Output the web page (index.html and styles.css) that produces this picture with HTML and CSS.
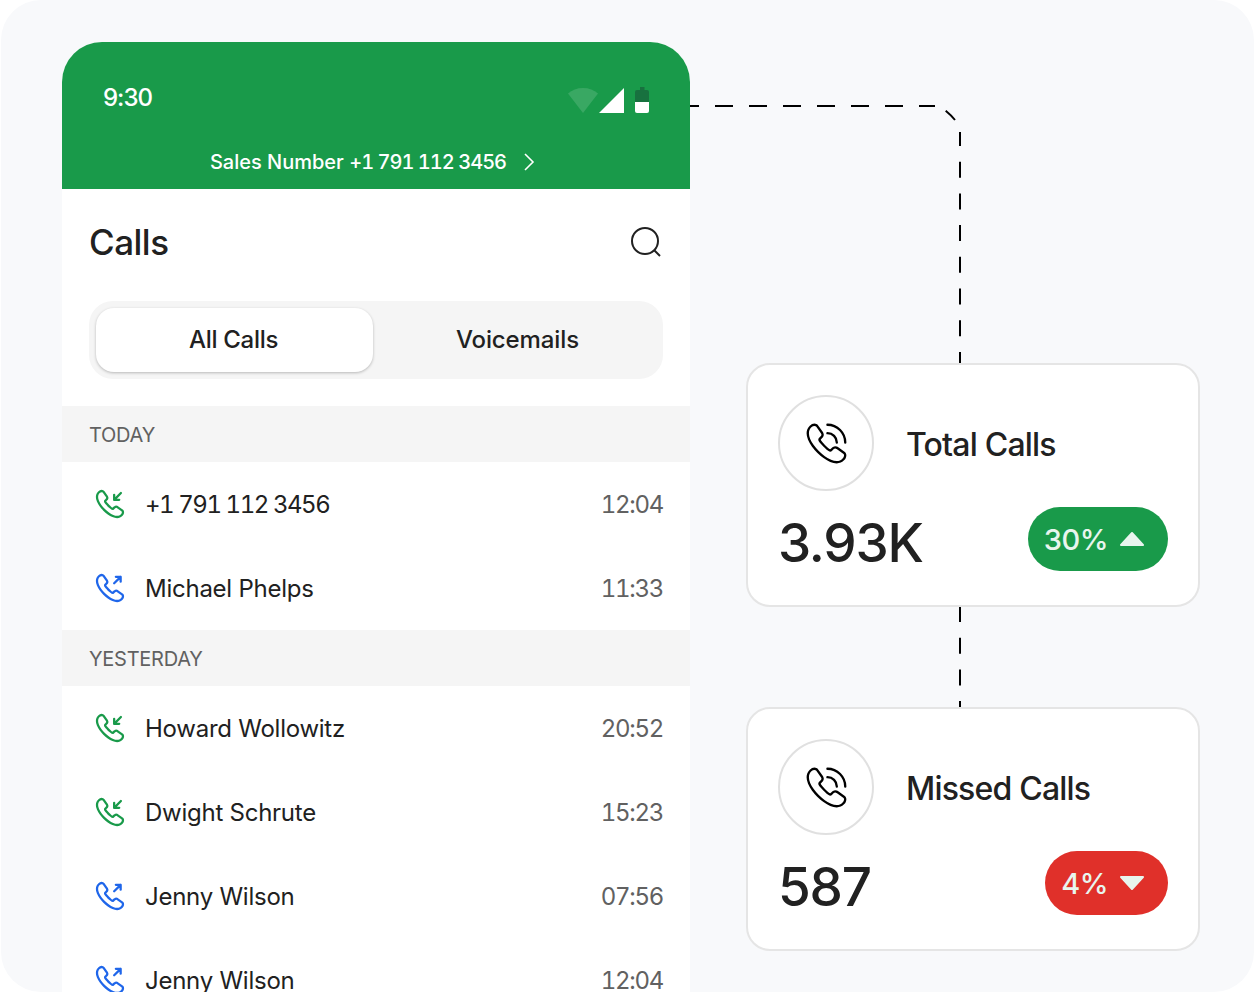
FILE: index.html
```html
<!DOCTYPE html>
<html lang="en">
<head>
<meta charset="utf-8">
<title>Calls</title>
<link rel="stylesheet" href="styles.css">
</head>
<body>
<svg width="0" height="0" class="defs">
  <defs>
    <path id="handset" d="M21.97 18.33c0 .36-.08.73-.25 1.09-.17.36-.39.7-.68 1.02-.49.54-1.03.93-1.64 1.18-.6.25-1.25.38-1.95.38-1.02 0-2.11-.24-3.26-.73s-2.3-1.15-3.44-1.98a28.75 28.75 0 0 1-3.28-2.8 28.414 28.414 0 0 1-2.79-3.27c-.82-1.14-1.48-2.28-1.96-3.41C2.24 8.67 2 7.58 2 6.54c0-.68.12-1.33.36-1.93.24-.61.62-1.17 1.15-1.67C4.15 2.31 4.85 2 5.59 2c.28 0 .56.06.81.18.26.12.49.3.67.56l2.32 3.27c.18.25.31.48.4.7.09.21.14.42.14.61 0 .24-.07.48-.21.71-.13.23-.32.47-.56.71l-.76.79c-.11.11-.16.24-.16.4 0 .08.01.15.03.23.03.08.06.14.08.2.18.33.49.76.93 1.28.45.52.93 1.05 1.45 1.58.54.53 1.06 1.02 1.59 1.47.52.44.95.74 1.29.92.05.02.11.05.18.08.08.03.16.04.25.04.17 0 .3-.06.41-.17l.76-.75c.25-.25.49-.44.72-.56.23-.14.46-.21.71-.21.19 0 .39.04.61.13.22.09.45.22.7.39l3.31 2.35c.26.18.44.39.55.64.1.25.16.5.16.78z"/>
    <g id="incoming"><use href="#handset"/><path d="M20.4 3.5 15.2 8.8M15.2 4.9v3.9h3.9"/></g>
    <g id="outgoing"><use href="#handset"/><path d="M20.2 3.4 15.2 8.4M16.5 3.4h3.7v3.7"/></g>
    <g id="ringing"><use href="#handset"/><path d="M12.500 2a9.500 9.500 0 0 1 9.500 9.500M12.500 6.500a5 5 0 0 1 5 5"/></g>
  </defs>
</svg>

<main class="canvas">
  <svg class="links" width="1254" height="992" viewBox="0 0 1254 992" aria-hidden="true">
    <path class="dash-h" d="M690 106H935"/>
    <path class="solid" d="M945.700 110.700Q951 115 955 120"/>
    <path class="dash-v" d="M960 132V364"/>
    <path class="dash-v2" d="M960 606V708"/>
  </svg>

  <section class="phone">
    <header class="phone-top">
      <div class="status">
        <span class="clock">9:30</span>
        <svg class="status-icons" width="82" height="27" viewBox="0 0 82 27">
          <path class="wifi" d="M0 6.500C4 3 9 1 15 1s11 2 15 5.500L15 26z"/>
          <path class="signal" d="M31 26 56 1v25z"/>
          <path class="battery-empty" d="M72 0h4.500v3H79a2 2 0 0 1 2 2v10H67V5a2 2 0 0 1 2-2h3z"/>
          <path class="battery-full" d="M67 15h14v9a2 2 0 0 1-2 2H69a2 2 0 0 1-2-2z"/>
        </svg>
      </div>
      <div class="number">
        <span>Sales Number <span class="sales-digits">+1 791 112 3456</span></span>
        <svg width="12" height="20" viewBox="0 0 12 20"><path d="M2 2l8 8-8 8"/></svg>
      </div>
    </header>

    <div class="title-row">
      <h1>Calls</h1>
      <svg class="search" width="32" height="32" viewBox="0 0 32 32"><circle cx="15" cy="15" r="13"/><path d="M24.500 24.500 30 30"/></svg>
    </div>

    <div class="tabs">
      <div class="tab tab-active">All Calls</div>
      <div class="tab tab-plain">Voicemails</div>
    </div>

    <div class="day">TODAY</div>
    <div class="call"><svg class="call-icon in" viewBox="0.46 0.46 23.08 23.08"><use href="#incoming"/></svg><span class="name name-digits">+1 791 112 3456</span><span class="time">12:04</span></div>
    <div class="call"><svg class="call-icon out" viewBox="0.46 0.46 23.08 23.08"><use href="#outgoing"/></svg><span class="name">Michael Phelps</span><span class="time">11:33</span></div>

    <div class="day">YESTERDAY</div>
    <div class="call"><svg class="call-icon in" viewBox="0.46 0.46 23.08 23.08"><use href="#incoming"/></svg><span class="name">Howard Wollowitz</span><span class="time">20:52</span></div>
    <div class="call"><svg class="call-icon in" viewBox="0.46 0.46 23.08 23.08"><use href="#incoming"/></svg><span class="name">Dwight Schrute</span><span class="time">15:23</span></div>
    <div class="call"><svg class="call-icon out" viewBox="0.46 0.46 23.08 23.08"><use href="#outgoing"/></svg><span class="name">Jenny Wilson</span><span class="time">07:56</span></div>
    <div class="call"><svg class="call-icon out" viewBox="0.46 0.46 23.08 23.08"><use href="#outgoing"/></svg><span class="name">Jenny Wilson</span><span class="time">12:04</span></div>
  </section>

  <aside class="stats">
    <article class="card">
      <div class="card-head">
        <span class="ring"><svg viewBox="0 0 24 24"><use href="#ringing"/></svg></span>
        <h2>Total Calls</h2>
      </div>
      <div class="card-foot">
        <span class="value">3.93K</span>
        <span class="pill pill-up">30%<svg width="24" height="14" viewBox="0 0 24 14"><path d="M12 1 23 13H1z"/></svg></span>
      </div>
    </article>
    <article class="card">
      <div class="card-head">
        <span class="ring"><svg viewBox="0 0 24 24"><use href="#ringing"/></svg></span>
        <h2>Missed Calls</h2>
      </div>
      <div class="card-foot">
        <span class="value">587</span>
        <span class="pill pill-down">4%<svg width="24" height="14" viewBox="0 0 24 14"><path d="M12 13 23 1H1z"/></svg></span>
      </div>
    </article>
  </aside>
</main>
</body>
</html>
```
FILE: styles.css
```css
* { box-sizing: border-box; }
html, body { margin: 0; padding: 0; background: #fff; }
body { width: 1254px; height: 992px; overflow: hidden; font-family: Inter, "Liberation Sans", sans-serif; color: #212121; }
.defs { position: absolute; }
.canvas {
  position: relative;
  display: flex;
  width: 1253px;
  height: 992px;
  margin-left: 1px;
  padding: 42px 0 0 61px;
  background: #f8f9fb;
  border-radius: 40px;
  overflow: hidden;
}
.links { position: absolute; left: -1px; top: 0; fill: none; stroke: #000; stroke-width: 2; }
.dash-h { stroke-dasharray: 18 16; stroke-dashoffset: 9; }
.dash-v { stroke-dasharray: 16 15.700; stroke-dashoffset: 2; }
.dash-v2 { stroke-dasharray: 16 15.700; }

.phone { position: relative; width: 628px; flex: none; background: #fff; border-radius: 40px 40px 0 0; }
.phone-top { height: 147px; padding: 39px 40px 0 41px; background: #199a4a; border-radius: 40px 40px 0 0; color: #fff; }
.status { display: flex; align-items: flex-start; justify-content: space-between; }
.clock { margin-top: 1px; font-size: 24px; font-weight: 500; line-height: 32px; letter-spacing: -1px; }
.status-icons { margin: 6px 0 0; fill: #fff; }
.wifi { fill-opacity: .14; }
.battery-empty { fill: #18713f; }
.number { display: flex; align-items: center; justify-content: center; gap: 17px; margin-top: 34px; padding-right: 8px; font-size: 20px; font-weight: 500; line-height: 28px; }
.sales-digits { font-variant-numeric: tabular-nums; letter-spacing: -.98px; }
.number svg { fill: none; stroke: #fff; stroke-width: 1.600; }

.title-row { display: flex; align-items: center; justify-content: space-between; height: 112px; padding: 0 28px 6px 27px; }
h1 { margin: 0; font-size: 35px; font-weight: 500; letter-spacing: -.5px; }
.search { fill: none; stroke: #212121; stroke-width: 2; }

.tabs { display: flex; width: 574px; height: 78px; margin: 0 0 27px 27px; padding: 7px; background: #f5f5f5; border-radius: 24px; }
.tab { display: flex; align-items: center; justify-content: center; flex: 1; padding-bottom: 2px; font-size: 24px; font-weight: 500; letter-spacing: -.3px; }
.tab-active { flex: none; width: 277px; height: 64px; padding-right: 2px; background: #fff; border-radius: 18px; box-shadow: 0 1px 3px rgba(0, 0, 0, .25); }
.tab-plain { padding-left: 6px; letter-spacing: -.1px; }

.day { display: flex; align-items: center; height: 56px; padding: 2px 0 0 27px; background: #f5f5f5; color: #616161; font-size: 20px; letter-spacing: -.25px; }
.call { display: flex; align-items: center; height: 84px; padding: 0 27px 0 33px; font-size: 24px; }
.call-icon { width: 30px; height: 30px; flex: none; margin: 0 20px 0 0; fill: none; stroke-width: 1.750; stroke-linecap: round; stroke-linejoin: round; }
.in { stroke: #199a4a; }
.out { stroke: #1f66ea; }
.name { flex: 1; letter-spacing: -.25px; }
.name-digits { font-variant-numeric: tabular-nums; letter-spacing: -1.450px; }
.time { color: #616161; font-variant-numeric: tabular-nums; letter-spacing: -1.300px; }

.stats { display: flex; flex-direction: column; gap: 100px; width: 454px; margin-left: 56px; padding-top: 321px; position: relative; }
.card { height: 244px; padding: 30px; background: #fff; border: 2px solid #e5e5e5; border-radius: 24px; }
.card-head { display: flex; align-items: center; gap: 32px; }
.ring { display: flex; align-items: center; justify-content: center; width: 96px; height: 96px; border: 2px solid #e0e0e0; border-radius: 50%; }
.ring svg { width: 45px; height: 45px; fill: none; stroke: #000; stroke-width: 1.250; stroke-linecap: round; stroke-linejoin: round; }
h2 { margin: 0; padding-top: 2px; font-size: 32px; font-weight: 500; letter-spacing: -.8px; }
.card-foot { display: flex; align-items: flex-start; justify-content: space-between; margin-top: 16px; }
.value { margin-top: 4px; font-size: 53px; font-weight: 500; letter-spacing: -1.200px; line-height: 64px; }
.pill { display: flex; align-items: center; gap: 12px; height: 64px; padding: 0 24px 0 16px; border-radius: 32px; color: #e8f5ee; font-size: 29px; font-weight: 500; letter-spacing: -.5px; }
.pill svg { fill: #e8f5ee; stroke: #e8f5ee; stroke-width: 2; stroke-linejoin: round; }
.pill-up { background: #199a4a; }
.pill-down { background: #e0302a; }
```
